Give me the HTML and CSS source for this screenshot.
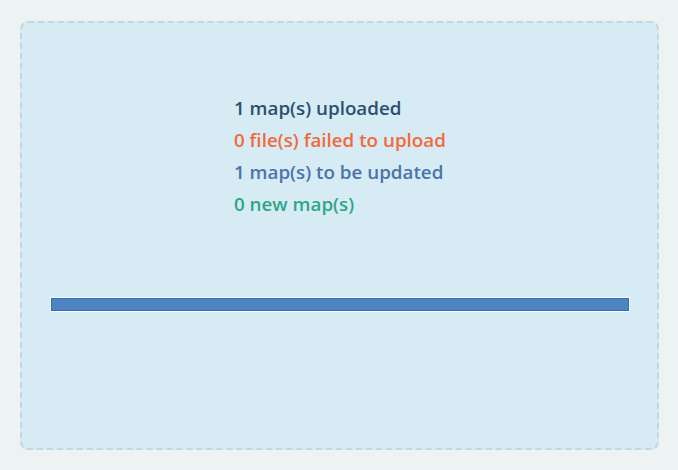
FILE: index.html
```html
<!DOCTYPE html>
<html lang="en">
<head>
  <meta charset="UTF-8" />
  <title>Upload maps</title>
  <link rel="stylesheet" href="styles.css">
</head>
<body>
  <div class="dropzone">
    <ul class="summary">
      <li class="uploaded">1 map(s) uploaded</li>
      <li class="failed">0 file(s) failed to upload</li>
      <li class="updated">1 map(s) to be updated</li>
      <li class="new">0 new map(s)</li>
    </ul>
    <div class="progress"><div class="progress-fill"></div></div>
  </div>
</body>
</html>
```

FILE: styles.css
```css
body {
  margin: 0;
  padding: 21px 19px 20px 20px;
  background-color: #edf2f3;
  font-family: "Open Sans", Arial, sans-serif;
}
.dropzone {
  box-sizing: border-box;
  height: 429px;
  background-color: #d6ebf4;
  border: 2px dashed #c4d6df;
  border-radius: 8px;
  padding: 0 27px 0 28px;
}
.summary {
  list-style: none;
  margin: 0;
  padding: 69px 0 0 184px;
  font-size: 18.8px;
  font-weight: 600;
}
.summary li {
  line-height: 32px;
}
.uploaded { color: #2c4f6f; }
.failed { color: #f26a3c; }
.updated { color: #4a74aa; }
.new { color: #2fa58a; }
.progress {
  margin-top: 77px;
  border: 1px solid #f3f8fb;
}
.progress-fill {
  height: 11px;
  background-color: #4d84c2;
  border: 1px solid #3a6caa;
}
```
